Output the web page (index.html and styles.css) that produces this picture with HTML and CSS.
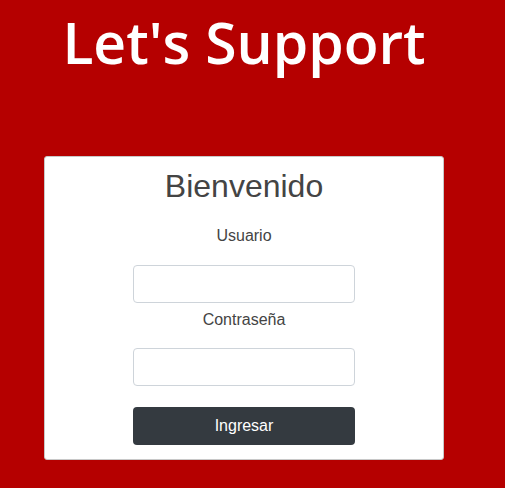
FILE: index.html
```html
<!DOCTYPE html>
<html lang="es">
<head>
<meta charset="utf-8">
<title>Let's Support</title>
<link rel="stylesheet" href="styles.css">
</head>
<body>
<main class="page">
  <h1 class="brand">Let's Support</h1>
  <form class="card">
    <h2 class="welcome">Bienvenido</h2>
    <label class="label" for="user">Usuario</label>
    <input class="field" id="user" type="text">
    <label class="label label-pass" for="pass">Contraseña</label>
    <input class="field" id="pass" type="password">
    <button class="btn" type="button">Ingresar</button>
  </form>
</main>
</body>
</html>
```
FILE: styles.css
```css
html, body {
  margin: 0;
  padding: 0;
  background: #b50000;
}
body {
  width: 505px;
  height: 488px;
  overflow: hidden;
}
.page {
  width: 400px;
  margin-left: 44px;
  display: flex;
  flex-direction: column;
}
.brand {
  margin: 0;
  padding-top: 3px;
  font-family: "Open Sans", sans-serif;
  font-weight: 600;
  font-size: 57px;
  line-height: 78px;
  color: #fff;
  text-align: center;
}
.card {
  margin-top: 75px;
  box-sizing: border-box;
  width: 400px;
  background: #fff;
  border: 1px solid #c8c8c8;
  border-radius: 3px;
  padding: 10px 0 14px;
  display: flex;
  flex-direction: column;
  align-items: center;
  font-family: "Liberation Sans", Arial, sans-serif;
  color: #444;
}
.welcome {
  margin: 0;
  font-size: 32px;
  font-weight: 400;
  line-height: 38px;
}
.label {
  font-size: 16px;
  line-height: 24px;
  margin-top: 19px;
  margin-bottom: 17px;
}
.label-pass {
  margin-top: 5px;
  margin-bottom: 16px;
}
.field {
  box-sizing: border-box;
  width: 222px;
  height: 38px;
  border: 1px solid #ced4da;
  border-radius: 4px;
  background: #fff;
  margin: 0;
  padding: 6px 12px;
  font-size: 16px;
}
.btn {
  box-sizing: border-box;
  margin-top: 21px;
  width: 222px;
  height: 38px;
  border: 0;
  border-radius: 4px;
  background: #343a40;
  color: #fff;
  font-family: "Liberation Sans", Arial, sans-serif;
  font-size: 16px;
  cursor: pointer;
}
```
